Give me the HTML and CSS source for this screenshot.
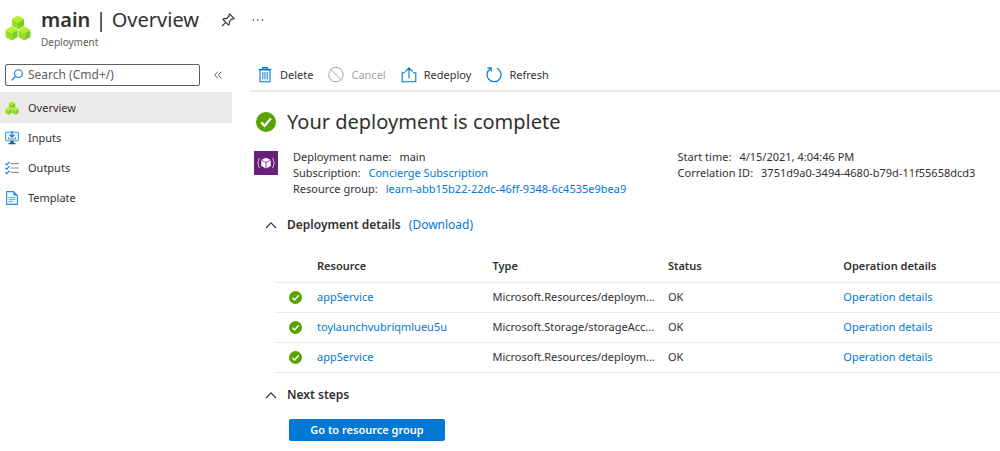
FILE: index.html
```html
<!DOCTYPE html>
<html lang="en">
<head>
<meta charset="utf-8">
<title>main | Overview - Deployment</title>
<meta name="viewport" content="width=device-width, initial-scale=1">
<link rel="stylesheet" href="styles.css">
</head>
<body>
<svg class="defs" aria-hidden="true">
  <symbol id="cubes" viewBox="0 0 26 26">
    <g id="cube-top"><path d="M13 .6l6 3.400-6 3.400L7 4z" fill="#b4ee20"/><path d="M7 4l6 3.400v7L7 11z" fill="#94de20"/><path d="M19 4l-6 3.400v7l6-3.400z" fill="#7ccc22"/></g>
    <use href="#cube-top" x="-6.4" y="11"/>
    <use href="#cube-top" x="6.4" y="11"/>
  </symbol>
  <symbol id="check" viewBox="0 0 20 20">
    <circle cx="10" cy="10" r="10" fill="#57a300"/>
    <path d="M5.2 10.4l3.4 3.4 6.3-7.2" fill="none" stroke="#fff" stroke-width="2.3"/>
  </symbol>
  <symbol id="chevron" viewBox="0 0 12 8">
    <path d="M1 7l5-5.2L11 7" fill="none" stroke="#323130" stroke-width="1.1"/>
  </symbol>
</svg>

<header class="page-header">
  <svg class="header-icon" aria-hidden="true"><use href="#cubes"/></svg>
  <div class="heading">
    <h1><strong>main</strong> | Overview</h1>
    <p>Deployment</p>
  </div>
  <button class="icon-button" type="button" aria-label="Pin">
    <svg width="14" height="14" viewBox="0 0 14 14" fill="none" stroke="#323130" stroke-width="1.1"><path d="M8.6 1l4.400 4.400-1 .7-1-.2-2.600 2.600.1 2.600-1 .9-5.500-5.500.9-1 2.600.1L8.100 3l-.3-1zM4.700 9.300L1 13"/></svg>
  </button>
  <button class="icon-button more" type="button" aria-label="More">
    <svg width="12" height="4" viewBox="0 0 12 4" fill="#323130"><circle cx="1.500" cy="2" r=".8"/><circle cx="6" cy="2" r=".8"/><circle cx="10.500" cy="2" r=".8"/></svg>
  </button>
</header>

<div class="layout">
  <aside class="sidebar">
    <div class="search-row">
      <label class="search">
        <svg width="12" height="12" viewBox="0 0 12 12" fill="none" stroke="#0078d4" stroke-width="1.1" aria-hidden="true"><circle cx="7.400" cy="4.600" r="3.900"/><path d="M4.600 7.400L.6 11.400"/></svg>
        <input type="search" placeholder="Search (Cmd+/)" aria-label="Search">
      </label>
      <button class="icon-button" type="button" aria-label="Collapse menu">
        <svg width="8" height="8" viewBox="0 0 8 8" fill="none" stroke="#323130" stroke-width=".8"><path d="M3.800.7L.8 4l3 3.300M7.300.7L4.300 4l3 3.300"/></svg>
      </button>
    </div>
    <nav class="menu">
      <a class="active" href="#overview"><svg aria-hidden="true"><use href="#cubes"/></svg>Overview</a>
      <a href="#inputs"><svg viewBox="0 0 14 14" aria-hidden="true"><path d="M.7 1.200h12.600v8.600H.7z" fill="#e8f5ff" stroke="#3a9de8"/><path d="M5.400 10h3.200l.4 2.500H5z" fill="#1f5fa8"/><path d="M3.500 12h7v1.300h-7z" fill="#1f5fa8"/><path d="M7 0v6M4.600 3.800L7 6.200l2.400-2.400" fill="none" stroke="#1581dd" stroke-width="1.300"/><path d="M3.500 6.200V8h7V6.200" fill="none" stroke="#7a8fa0"/></svg>Inputs</a>
      <a href="#outputs"><svg viewBox="0 0 14 14" aria-hidden="true"><path d="M5.500 2.600H14M5.500 7H14M5.500 11.400H14" stroke="#949494" stroke-width="1.200"/><path d="M.4 2.400l1.400 1.400L4.500.8M.4 6.800l1.400 1.400 2.700-3M.4 11.200l1.400 1.400 2.700-3" fill="none" stroke="#1581dd" stroke-width="1.200"/></svg>Outputs</a>
      <a href="#template"><svg viewBox="0 0 14 14" aria-hidden="true"><path d="M1.600.6h6.900l3.900 3.900v8.900H1.600z" fill="#f0f8ff" stroke="#2a8ee6" stroke-width="1.100"/><path d="M8.400.4v4.200h4.200z" fill="#2a8ee6"/><path d="M3.500 6.500h7M3.500 8.600h7M3.500 10.700h4.500" stroke="#5aa9ee"/></svg>Template</a>
    </nav>
  </aside>

  <main class="content">
    <div class="toolbar">
      <button type="button"><svg viewBox="0 0 16 16" aria-hidden="true"><path d="M3 2.900h10v11.800H3zM1.500 2.300h13M5.700 2V.6h4.600V2" fill="none" stroke="#0078d4" stroke-width="1.100"/><path d="M5.800 5v7.400M8 5v7.400M10.200 5v7.400" stroke="#0078d4"/></svg>Delete</button>
      <button type="button" disabled><svg viewBox="0 0 16 16" fill="none" stroke="#a6a4a2" aria-hidden="true"><circle cx="8" cy="7.600" r="7.200"/><path d="M2.900 2.500l10.200 10.200"/></svg>Cancel</button>
      <button type="button"><svg viewBox="0 0 16 16" fill="none" stroke="#0078d4" stroke-width="1.100" aria-hidden="true"><path d="M4 5.800H1.200v8.900h13.600V5.800H12M8 11.500V.8M4.200 4.600L8 .8l3.800 3.800"/></svg>Redeploy</button>
      <button type="button"><svg viewBox="0 0 16 16" fill="none" stroke="#0078d4" stroke-width="1.200" aria-hidden="true"><path d="M10.800 1.300A7 7 0 1 1 4.500 1.700M1.400.8h3.800v3.800"/></svg>Refresh</button>
    </div>

    <div class="status">
      <svg aria-hidden="true"><use href="#check"/></svg>
      <h2>Your deployment is complete</h2>
    </div>

    <section class="essentials">
      <svg viewBox="0 0 24 24" aria-hidden="true"><path fill="#68217a" d="M0 0h24v24H0z"/><path d="M5.800 7.500c-1.500 0-1.300 1-1.300 2.300 0 1.300-.3 1.900-1.200 2.200.9.300 1.200.9 1.200 2.200 0 1.300-.2 2.300 1.300 2.300M18.200 7.500c1.500 0 1.300 1 1.300 2.300 0 1.300.3 1.900 1.200 2.200-.9.300-1.200.9-1.200 2.200 0 1.300.2 2.300-1.300 2.300" fill="none" stroke="#e6d5ea" stroke-width=".9"/><path d="M12 6.800l4.700 2.100v6L12 17.400l-4.700-2.500v-6z" fill="#fff"/><path d="M7.300 9.200l4.700 2.300 4.700-2.300M12 11.500v5.800" fill="none" stroke="#68217a" stroke-width=".8"/></svg>
      <dl>
        <div><dt>Deployment name:</dt><dd>main</dd></div>
        <div><dt>Subscription:</dt><dd><a href="#subscription">Concierge Subscription</a></dd></div>
        <div><dt>Resource group:</dt><dd><a href="#group">learn-abb15b22-22dc-46ff-9348-6c4535e9bea9</a></dd></div>
      </dl>
      <dl>
        <div><dt>Start time:</dt><dd>4/15/2021, 4:04:46 PM</dd></div>
        <div><dt>Correlation ID:</dt><dd>3751d9a0-3494-4680-b79d-11f55658dcd3</dd></div>
      </dl>
    </section>

    <section>
      <div class="section-head">
        <button class="icon-button" type="button" aria-label="Collapse deployment details"><svg width="12" height="8"><use href="#chevron"/></svg></button>
        <h3>Deployment details</h3>
        <a href="#download">(Download)</a>
      </div>
      <table class="details">
        <thead>
          <tr><th class="state"></th><th>Resource</th><th>Type</th><th>Status</th><th>Operation details</th></tr>
        </thead>
        <tbody>
          <tr><td class="state"><svg role="img" aria-label="Succeeded"><use href="#check"/></svg></td><td><a href="#r1">appService</a></td><td>Microsoft.Resources/deploym...</td><td>OK</td><td><a href="#o1">Operation details</a></td></tr>
          <tr><td class="state"><svg role="img" aria-label="Succeeded"><use href="#check"/></svg></td><td><a href="#r2">toylaunchvubriqmlueu5u</a></td><td>Microsoft.Storage/storageAcc...</td><td>OK</td><td><a href="#o2">Operation details</a></td></tr>
          <tr><td class="state"><svg role="img" aria-label="Succeeded"><use href="#check"/></svg></td><td><a href="#r3">appService</a></td><td>Microsoft.Resources/deploym...</td><td>OK</td><td><a href="#o3">Operation details</a></td></tr>
        </tbody>
      </table>
    </section>

    <section>
      <div class="section-head next">
        <button class="icon-button" type="button" aria-label="Collapse next steps"><svg width="12" height="8"><use href="#chevron"/></svg></button>
        <h3>Next steps</h3>
      </div>
      <button class="primary" type="button">Go to resource group</button>
    </section>
  </main>
</div>
</body>
</html>
```
FILE: styles.css
```css
* {
  box-sizing: border-box;
}

body {
  margin: 0;
  background: #fff;
  color: #323130;
  font: 11px/16px "Noto Sans", "Open Sans", sans-serif;
}

h1, h2, h3, p, dl, dd {
  margin: 0;
  font-weight: 400;
}

button, input {
  font: inherit;
  color: inherit;
}

a {
  color: #0078d4;
  text-decoration: none;
}

svg {
  display: block;
  flex: none;
}

.defs {
  position: absolute;
  width: 0;
  height: 0;
}

.icon-button {
  display: flex;
  padding: 0;
  border: 0;
  background: none;
}

.page-header {
  display: flex;
  align-items: flex-start;
  padding: 7px 5px 0;
  height: 64px;
}

.header-icon {
  width: 26px;
  height: 26px;
  margin: 8px 10px 0 0;
}

.heading h1 {
  font-size: 20px;
  line-height: 26px;
}

.heading strong {
  font-weight: 600;
}

.heading p {
  font-size: 10px;
  line-height: 18px;
  color: #605e5c;
}

.page-header .icon-button {
  margin: 6px 0 0 22px;
}

.page-header .more {
  margin: 11px 0 0 17px;
}

.layout {
  display: flex;
}

.sidebar {
  flex: none;
  width: 232px;
  margin-right: 18px;
}

.search-row {
  display: flex;
  align-items: center;
  gap: 14px;
  padding-left: 5px;
}

.search {
  display: flex;
  align-items: center;
  gap: 5px;
  width: 195px;
  height: 22px;
  padding: 0 5px;
  border: 1px solid #605e5c;
  border-radius: 2px;
  font-size: 12px;
}

.search input {
  width: 100%;
  min-width: 0;
  padding: 0;
  border: 0;
  outline: 0;
  background: none;
}

.search input::placeholder {
  color: #605e5c;
  opacity: 1;
}

.menu {
  margin-top: 6px;
  border-top: 1px solid #edebe9;
}

.menu a {
  display: flex;
  align-items: center;
  gap: 9px;
  height: 30px;
  padding-left: 5px;
  color: #323130;
}

.menu svg {
  width: 14px;
  height: 14px;
}

.menu .active {
  background: #edebe9;
}

.content {
  flex: 1;
  min-width: 0;
}

.toolbar {
  display: flex;
  gap: 15px;
  height: 28px;
  padding-left: 7px;
  border-bottom: 2px solid #edebe9;
}

.toolbar button {
  display: flex;
  align-items: center;
  gap: 7px;
  height: 22px;
  padding: 0;
  border: 0;
  background: none;
}

.toolbar button:disabled {
  color: #a19f9d;
}

.toolbar svg {
  width: 16px;
  height: 16px;
}

.status {
  display: flex;
  align-items: center;
  gap: 11px;
  padding: 16px 0 0 6px;
}

.status svg {
  width: 20px;
  height: 20px;
}

.status h2 {
  font-size: 20px;
  line-height: 28px;
}

.essentials {
  display: grid;
  grid-template-columns: 24px 17fr 15fr;
  padding: 13px 0 0 4px;
}

.essentials dl {
  padding-left: 15px;
}

.essentials dl div {
  display: flex;
  gap: 8px;
  white-space: nowrap;
}

.essentials dl + dl {
  padding-left: 16px;
}

.essentials svg {
  width: 24px;
  height: 24px;
  margin-top: 2px;
}

.section-head {
  display: flex;
  align-items: center;
  gap: 8px;
  padding: 20px 0 0 15px;
  font-size: 12px;
}

.section-head .icon-button {
  margin-right: 2px;
}

.section-head h3 {
  font-size: 12px;
  font-weight: 600;
}

.details {
  width: calc(100% - 25px);
  margin: 17px 0 0 25px;
  table-layout: fixed;
  border-collapse: collapse;
}

.details th,
.details td {
  width: 24.2%;
  height: 30px;
  padding: 0 8px 0 0;
  overflow: hidden;
  border-bottom: 1px solid #edebe9;
  text-align: left;
  text-overflow: ellipsis;
  white-space: nowrap;
}

.details th {
  height: 32px;
  font-weight: 600;
}

.details .state {
  width: 42px;
  padding-left: 14px;
}

.details th:last-child,
.details td:last-child {
  width: auto;
}

.details svg {
  width: 13px;
  height: 13px;
}

.next {
  padding-top: 14px;
}

.primary {
  min-width: 156px;
  height: 22px;
  margin: 16px 0 0 39px;
  padding: 0 16px;
  border: 0;
  border-radius: 2px;
  background: #0078d4;
  color: #fff;
  font-weight: 600;
}
```
